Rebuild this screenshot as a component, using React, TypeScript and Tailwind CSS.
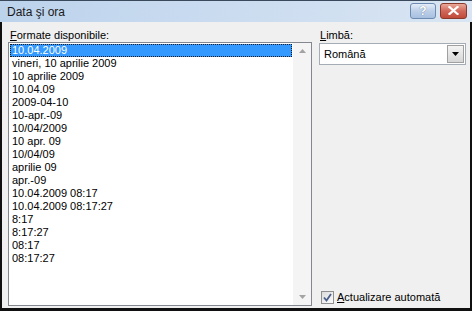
import React from "react";

const items = [
  "10.04.2009",
  "vineri, 10 aprilie 2009",
  "10 aprilie 2009",
  "10.04.09",
  "2009-04-10",
  "10-apr.-09",
  "10/04/2009",
  "10 apr. 09",
  "10/04/09",
  "aprilie 09",
  "apr.-09",
  "10.04.2009 08:17",
  "10.04.2009 08:17:27",
  "8:17",
  "8:17:27",
  "08:17",
  "08:17:27",
];

export default function App() {
  return (
    <div
      className="w-[472px] h-[311px] bg-[#101010] flex flex-col px-[2px] pb-[3px] overflow-hidden"
      style={{ fontFamily: '"Liberation Sans", Arial, sans-serif' }}
    >
      {/* Title bar */}
      <div className="h-[22px] flex items-center justify-between bg-gradient-to-r from-[#bcd3ec] via-[#cbdcf0] to-[#d9e5f2] border-t border-[#3a4a5c] -mx-[2px] px-[2px]">
        <span className="pl-[5px] text-[12px] text-[#1a1a1a] leading-none">Data şi ora</span>
        <div className="flex items-center gap-[4px] pr-[3px] pb-[2px]">
          <div className="w-[26px] h-[16px] rounded-[3px] border border-[#6d8bb0] bg-gradient-to-b from-[#e3edf8] via-[#bccfe8] to-[#a7c0e0] flex items-center justify-center text-[12px] font-bold text-white leading-none" style={{ textShadow: "0 0 1px #40587a" }}>
            ?
          </div>
          <div className="w-[27px] h-[16px] rounded-[3px] border border-[#8a3a2c] bg-gradient-to-b from-[#e9a99a] via-[#d0675a] to-[#c04a38] flex items-center justify-center">
            <svg width="11" height="9" viewBox="0 0 11 9">
              <path d="M1.5 1 L9.5 8 M9.5 1 L1.5 8" stroke="#ffffff" strokeWidth="2.2" strokeLinecap="square" />
            </svg>
          </div>
        </div>
      </div>

      {/* Body */}
      <div className="flex-1 bg-[#f0f0f0] flex pl-[6px] pt-[7px] pb-[2px] gap-[7px] text-[11px] text-black">
        {/* Left column */}
        <div className="w-[304px] flex flex-col">
          <div className="h-[13px] leading-[13px] pl-[2px]">
            <span className="underline">F</span>ormate disponibile:
          </div>
          <div className="h-[264px] border border-[#828790] bg-white flex">
            <div className="flex-1 pl-[1px] pt-[1px] flex flex-col">
              {items.map((t, i) =>
                i === 0 ? (
                  <div
                    key={i}
                    className="h-[13px] leading-[11px] bg-[#3399ff] text-white border border-dotted border-[#1a1a1a] pl-[1px]"
                  >
                    {t}
                  </div>
                ) : (
                  <div key={i} className="h-[13px] leading-[13px] pl-[2px] whitespace-nowrap">
                    {t}
                  </div>
                )
              )}
            </div>
            <div className="w-[18px] ml-[1px] bg-[#f4f4f4] flex flex-col justify-between items-center py-[6px]">
              <svg width="7" height="4" viewBox="0 0 7 4">
                <path d="M0 4 L3.5 0 L7 4 Z" fill="#a3a3a3" />
              </svg>
              <svg width="7" height="4" viewBox="0 0 7 4">
                <path d="M0 0 L3.5 4 L7 0 Z" fill="#a3a3a3" />
              </svg>
            </div>
          </div>
        </div>

        {/* Right column */}
        <div className="w-[147px] flex flex-col">
          <div className="h-[13px] leading-[13px] pl-[1px]">
            <span className="underline">L</span>imbă:
          </div>
          <div className="mt-[1px] h-[22px] border border-[#a5acb5] bg-white flex items-center">
            <span className="flex-1 pl-[4px]">Română</span>
            <div className="w-[17px] h-[18px] mr-[1px] border border-[#a0a0a0] bg-gradient-to-b from-[#f4f4f4] to-[#d6d6d6] flex items-center justify-center">
              <svg width="7" height="4" viewBox="0 0 7 4">
                <path d="M0 0 L3.5 4 L7 0 Z" fill="#000" />
              </svg>
            </div>
          </div>
          <div className="mt-auto flex items-center pl-[2px] pb-[2px]">
            <div className="w-[13px] h-[13px] border border-[#8f8f8f] bg-gradient-to-br from-[#dcdcdc] to-[#fbfbfb] flex items-center justify-center">
              <svg width="9" height="9" viewBox="0 0 9 9">
                <path d="M1 4.5 L3.5 7.5 L8 1" stroke="#4a5f8c" strokeWidth="1.8" fill="none" />
              </svg>
            </div>
            <span className="ml-[3px] leading-[13px]">
              <span className="underline">A</span>ctualizare automată
            </span>
          </div>
        </div>
      </div>
    </div>
  );
}
